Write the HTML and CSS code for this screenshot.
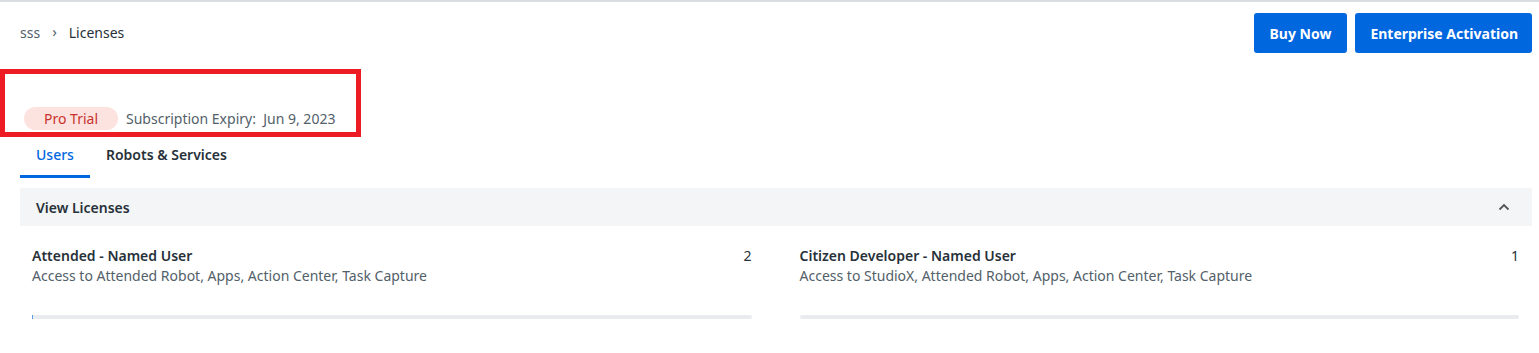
FILE: index.html
```html
<!DOCTYPE html>
<html>
<head>
    <title>Licenses</title>
    <link rel="stylesheet" href="styles.css">
</head>
<body>
  <div class="page">
    <div class="header">
      <div class="crumbs">
        <span class="crumb-parent">sss</span>
        <span class="crumb-sep">&#8250;</span>
        <span class="crumb-current">Licenses</span>
      </div>
      <div class="actions">
        <button class="btn">Buy Now</button>
        <button class="btn">Enterprise Activation</button>
      </div>
    </div>

    <div class="plan">
      <span class="pill">Pro Trial</span>
      <span class="expiry">Subscription Expiry:&nbsp; Jun 9, 2023</span>
      <div class="highlight"></div>
    </div>

    <div class="tabs">
      <div class="tab active">Users</div>
      <div class="tab">Robots &amp; Services</div>
    </div>

    <div class="panel-head">
      <span>View Licenses</span>
      <svg class="chev" width="12" height="8" viewBox="0 0 12 8"><path d="M1.5 6.5 L6 2 L10.5 6.5" fill="none" stroke="#555" stroke-width="1.8"/></svg>
    </div>

    <div class="cards">
      <div class="card">
        <div class="card-top">
          <span class="card-title">Attended - Named User</span>
          <span class="card-count">2</span>
        </div>
        <div class="card-desc">Access to Attended Robot, Apps, Action Center, Task Capture</div>
        <div class="bar"><div class="bar-fill" style="width: 1px"></div></div>
      </div>
      <div class="card">
        <div class="card-top">
          <span class="card-title">Citizen Developer - Named User</span>
          <span class="card-count">1</span>
        </div>
        <div class="card-desc">Access to StudioX, Attended Robot, Apps, Action Center, Task Capture</div>
        <div class="bar"></div>
      </div>
    </div>
  </div>
</body>
</html>
```

FILE: styles.css
```css
body {
    margin: 0;
    background-color: #fff;
    font-family: "Noto Sans", Arial, sans-serif;
    font-size: 14px;
    color: #273139;
}

.page {
    border-top: 2px solid #d9dde2;
    padding: 0 7px 0 20px;
}

.header {
    display: flex;
    justify-content: space-between;
    align-items: center;
    padding-top: 11px;
    height: 40px;
}

.crumbs {
    display: flex;
    align-items: center;
    gap: 12px;
    margin-top: -2px;
    color: #273139;
}

.crumb-parent {
    color: #526069;
}

.crumb-sep {
    color: #526069;
    font-size: 15px;
    margin-top: -2px;
}

.actions {
    display: flex;
    gap: 8px;
}

.btn {
    background-color: #0067df;
    color: #fff;
    border: none;
    border-radius: 3px;
    height: 40px;
    padding: 0 16px 0 15px;
    font-family: "Noto Sans", Arial, sans-serif;
    font-size: 14px;
    font-weight: 700;
}

.btn + .btn {
    padding: 0 14px 0 15px;
}

.plan {
    position: relative;
    display: flex;
    align-items: center;
    gap: 8px;
    margin-top: 53px;
    padding-left: 4px;
    height: 24px;
}

.pill {
    background-color: #fde3df;
    color: #c8322d;
    border-radius: 12px;
    height: 23px;
    line-height: 23px;
    padding: 0 20px;
}

.expiry {
    color: #526069;
}

.highlight {
    position: absolute;
    left: -20px;
    top: -37px;
    width: 351px;
    height: 58px;
    border: 5px solid #ed1c24;
}

.tabs {
    display: flex;
    margin-top: 12px;
}

.tab {
    padding: 3px 16px 11px;
    font-weight: 600;
    color: #273139;
    border-bottom: 3px solid transparent;
}

.tab.active {
    color: #0067df;
    font-weight: 500;
    border-bottom-color: #0067df;
}

.panel-head {
    display: flex;
    justify-content: space-between;
    align-items: center;
    background-color: #f4f5f7;
    height: 38px;
    margin-top: 10px;
    padding: 0 22px 0 16px;
    font-weight: 600;
}

.cards {
    display: grid;
    grid-template-columns: 1fr 1fr;
    column-gap: 48px;
    padding: 20px 13px 0 12px;
}

.card-top {
    display: flex;
    justify-content: space-between;
    line-height: 20px;
}

.card-title {
    font-weight: 600;
}

.card-desc {
    color: #526069;
    line-height: 20px;
}

.bar {
    height: 4px;
    background-color: #e9ebee;
    border-radius: 2px;
    margin-top: 29px;
}

.bar-fill {
    height: 4px;
    background-color: #5a9be6;
}
```
